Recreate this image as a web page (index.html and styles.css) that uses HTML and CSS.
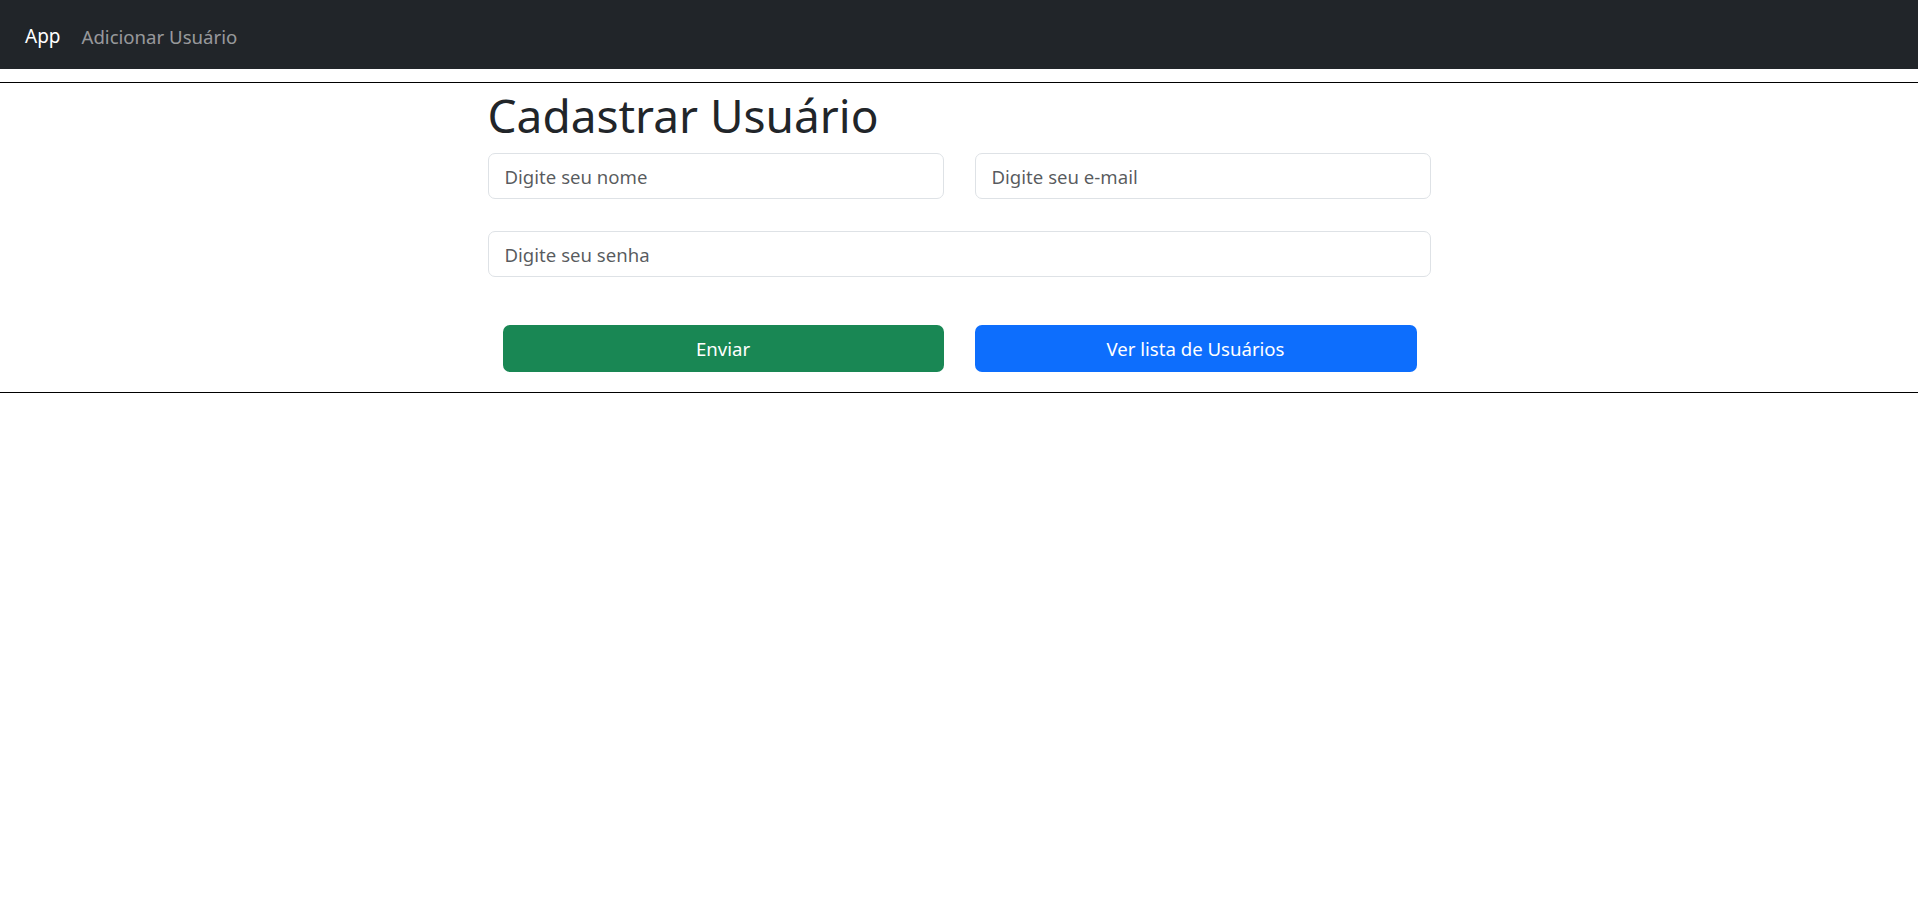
FILE: index.html
```html
<!DOCTYPE html>
<html lang="pt-BR">
<head>
<meta charset="utf-8">
<title>App</title>
<link rel="stylesheet" href="styles.css">
</head>
<body>
<nav class="navbar">
  <a class="brand" href="#">App</a>
  <a class="nav-link" href="#">Adicionar Usuário</a>
</nav>
<hr class="rule rule-top">
<main class="container">
  <h1 class="title">Cadastrar Usuário</h1>
  <form class="form">
    <div class="row two">
      <input class="field" type="text" placeholder="Digite seu nome">
      <input class="field" type="email" placeholder="Digite seu e-mail">
    </div>
    <div class="row one">
      <input class="field" type="password" placeholder="Digite seu senha">
    </div>
    <div class="row two actions">
      <button class="btn btn-green" type="submit">Enviar</button>
      <button class="btn btn-blue" type="button">Ver lista de Usuários</button>
    </div>
  </form>
</main>
<hr class="rule rule-bottom">
</body>
</html>
```
FILE: styles.css
```css
* { box-sizing: border-box; }
html, body { margin: 0; padding: 0; background: #fff; }
body {
  font-family: "Noto Sans", "Open Sans", sans-serif;
  color: #212529;
}
.navbar {
  height: 69px;
  background: #212529;
  display: flex;
  align-items: center;
  padding-left: 25px;
  padding-top: 3px;
}
.brand {
  color: #fff;
  text-decoration: none;
  font-size: 19px;
  margin-right: 21px;
}
.nav-link {
  color: rgba(255,255,255,.55);
  text-decoration: none;
  font-size: 18.6px;
}
.rule {
  border: 0;
  border-top: 1px solid #000;
  margin: 0;
  height: 0;
}
.rule-top { margin-top: 13px; }
.rule-bottom { margin-top: 20px; }
.container {
  width: 943px;
  margin: 0 auto;
}
.title {
  margin: 0;
  padding-top: 0;
  font-size: 46px;
  font-weight: 400;
  line-height: 64px;
  height: 70px;
}
.row.two {
  display: grid;
  grid-template-columns: 1fr 1fr;
  column-gap: 31px;
}
.row.one { margin-top: 32px; display: flex; }
.field {
  width: 100%;
  height: 46px;
  border: 1px solid #dee2e6;
  border-radius: 7px;
  padding: 0 16px;
  font-family: inherit;
  font-size: 18.6px;
  color: #212529;
  background: #fff;
  outline: none;
}
.field::placeholder { color: rgba(33,37,41,.75); }
.actions { margin-top: 48px; }
.btn {
  height: 47px;
  border: 0;
  border-radius: 7px;
  color: #fff;
  font-family: inherit;
  font-size: 18.6px;
  cursor: pointer;
}
.btn-green { background: #198754; margin-left: 15px; }
.btn-blue { background: #0d6efd; margin-right: 14px; }
```
